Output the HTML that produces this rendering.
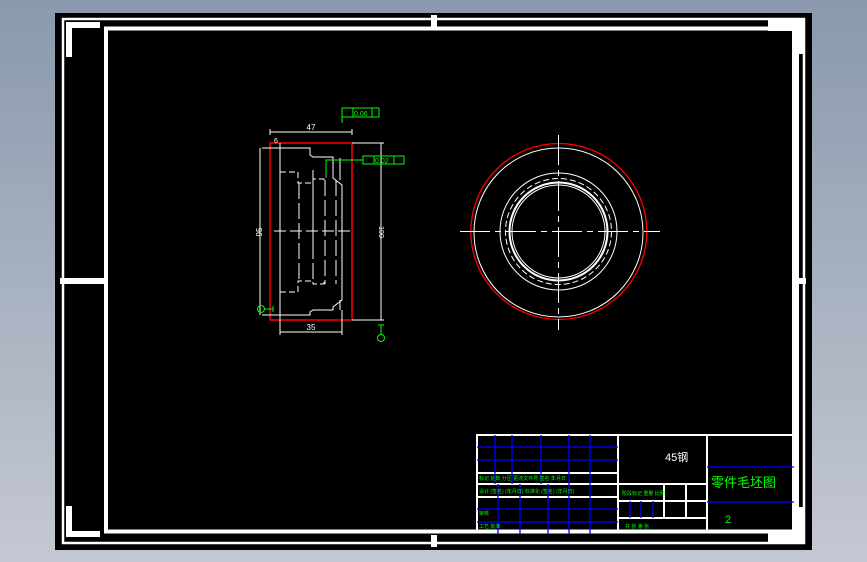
<!DOCTYPE html>
<html><head><meta charset="utf-8"><style>
html,body{margin:0;padding:0;width:867px;height:562px;overflow:hidden;background:linear-gradient(#8a99ad,#c4c8d2);}
svg{position:absolute;left:0;top:0}
text{font-family:"Liberation Sans","Noto Sans CJK SC",sans-serif}
</style></head><body>
<svg width="867" height="562" viewBox="0 0 867 562">
<rect x="55" y="13" width="757" height="537" fill="#000"/>
<!-- outer thin frame -->
<rect x="63" y="19" width="741" height="524" fill="none" stroke="#fff" stroke-width="2.5"/>
<!-- inner frame -->
<rect x="106" y="28.5" width="688" height="503" fill="none" stroke="#fff" stroke-width="4"/>
<rect x="792" y="27" width="7" height="507" fill="#fff"/>
<!-- corner marks -->
<path d="M69 57 V25 H100" fill="none" stroke="#fff" stroke-width="6"/>
<path d="M69 506 V534 H100" fill="none" stroke="#fff" stroke-width="6"/>
<rect x="768" y="18" width="37" height="13" fill="#fff"/>
<rect x="792" y="18" width="13" height="36" fill="#fff"/>
<rect x="768" y="531" width="37" height="13" fill="#fff"/>
<rect x="792" y="507" width="13" height="37" fill="#fff"/>
<rect x="60" y="278" width="46" height="6" fill="#fff"/>
<rect x="796" y="278" width="10" height="6" fill="#fff"/>
<rect x="431" y="15" width="6" height="12" fill="#fff"/>
<rect x="431" y="535" width="6" height="12" fill="#fff"/>

<!-- left view -->
<g fill="none" stroke="#fff" stroke-width="1">
<rect x="270" y="143" width="82" height="177" stroke="#f00" stroke-width="1.5"/>
<path d="M280 148 H310 V155 L313 157 H333 V178 L342 185 V300 L333 307 V310 H313 L310 312 V315 H280 Z"/>
<path d="M280 143 V335 M342 310 V335 M280 332 H342"/>
<path d="M270 129 V135 M352 129 V135 M270 132 H352"/>
<path d="M262 148 H280 M262 315 H280 M260 148 V315"/>
<path d="M352 143 H384 M352 320 H384 M381 143 V320"/>
<path d="M340 158 V180 M340 300 V310"/>
<path d="M280 172 H298 V183 H313 V179 H324 V182 M280 292 H298 V281 H313 V284 H324 V280" stroke-dasharray="6 3"/>
<path d="M299 183 V281 M313 183 V281 M325 180 V284 M336 180 V284" stroke-dasharray="16 4"/>
<path d="M274 231 H350" stroke-dasharray="12 4"/>
<path d="M313 170 V255" />
</g>
<text x="311" y="130" fill="#fff" font-size="8" text-anchor="middle">47</text>
<text x="274" y="143" fill="#fff" font-size="7">6</text>
<text x="311" y="330" fill="#fff" font-size="8" text-anchor="middle">35</text>
<text transform="translate(262,232) rotate(-90)" fill="#fff" font-size="8" text-anchor="middle">95</text>
<text transform="translate(379,232) rotate(90)" fill="#fff" font-size="7" text-anchor="middle">100</text>
<!-- green tolerance frames -->
<g fill="none" stroke="#0f0" stroke-width="1">
<rect x="342" y="108" width="37" height="9"/><path d="M353 108 V117 M372 108 V117 M342 117 V123"/>
<rect x="363" y="156" width="41" height="8"/><path d="M374 156 V164 M394 156 V164 M363 160 H326 V178"/>
<circle cx="261" cy="309" r="3.5"/><path d="M265 309 H273 M273 306 V312"/>
<circle cx="381" cy="338" r="3.5"/><path d="M381 325 V334 M378 325 H384"/>
</g>
<text x="354" y="116" fill="#0f0" font-size="7">0.06</text>
<text x="375" y="163" fill="#0f0" font-size="7">0.02</text>

<!-- right view -->
<g fill="none" stroke="#fff" stroke-width="1">
<circle cx="558.8" cy="231.5" r="88" stroke="#f00" stroke-width="1.3"/>
<circle cx="558.5" cy="232.5" r="84.5"/>
<circle cx="558.5" cy="231.5" r="58.5"/>
<circle cx="558.5" cy="231.5" r="53" stroke-dasharray="6 3"/>
<circle cx="558.5" cy="231.5" r="49" stroke-width="2"/>
<circle cx="558.5" cy="231.5" r="46.5"/>
<path d="M460 231.5 H660" stroke-dasharray="30 5 6 5"/>
<path d="M558.5 135 V330" stroke-dasharray="30 5 6 5"/>
</g>

<!-- title block -->
<g fill="none" stroke="#fff" stroke-width="2">
<rect x="477" y="435" width="317" height="97"/>
<path d="M618 435 V532 M707 435 V532 M477 473 H618 M477 484 H707 M477 497 H618 M618 501 H707 M618 518 H707 M664 484 V518 M686 484 V518"/>
</g>
<g stroke="#00f" stroke-width="1.3">
<path d="M495 435 V484 M512 435 V484 M541 435 V484 M569 435 V484 M590 435 V484"/>
<path d="M498 484 V534 M520 484 V534 M548 484 V534 M569 484 V534 M590 484 V534"/>
<path d="M477 447 H618 M477 460 H618 M477 509 H618 M477 522 H618 M707 467 H794 M707 502 H794 M630 501 V518 M641 501 V518 M653 501 V518"/>
</g>
<text x="665" y="461" fill="#fff" font-size="11">45钢</text>
<text x="711" y="487" fill="#0f0" font-size="13">零件毛坯图</text>
<text x="725" y="523" fill="#0f0" font-size="11">2</text>
<g fill="#0f0" font-size="5">
<text x="479" y="480">标记 处数 分区 更改文件号 签名 年月日</text>
<text x="479" y="493">设计 (签名) (年月日) 标准化 (签名) (年月日)</text>
<text x="479" y="515">审核</text>
<text x="479" y="528">工艺         批准</text>
<text x="622" y="495">阶段标记  重量  比例</text>
<text x="625" y="528">共  张  第  张</text>
</g>
</svg>
</body></html>
